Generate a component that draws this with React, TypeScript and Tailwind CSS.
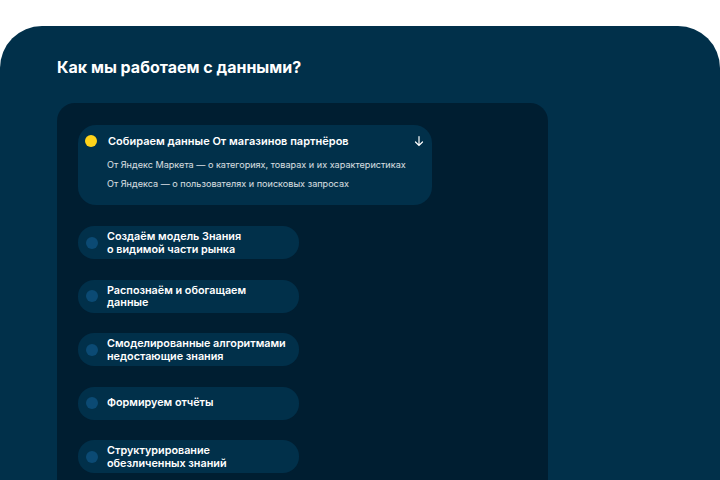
import React from "react";

const items: string[][] = [
  ["Создаём модель Знания", "о видимой части рынка"],
  ["Распознаём и обогащаем", "данные"],
  ["Смоделированные алгоритмами", "недостающие знания"],
  ["Формируем отчёты"],
  ["Структурирование", "обезличенных знаний"],
];

export default function App() {
  return (
    <div
      className="w-[720px] h-[480px] bg-white overflow-hidden pt-[26px]"
      style={{ fontFamily: "Inter, 'Noto Sans', sans-serif" }}
    >
      <div className="h-[480px] bg-[#01304a] rounded-t-[42px] px-[57px] pt-[30px]">
        <h1 className="text-[16px] font-bold text-white leading-[22px]">
          Как мы работаем с данными?
        </h1>
        <div className="mt-[25px] w-[491px] h-[400px] bg-[#001e31] rounded-[18px] pl-[21px] pt-[22px]">
          <div className="w-[354px] h-[80px] bg-[#01304a] rounded-[18px] pl-[7px] pr-[7px] pt-[8px]">
            <div className="flex items-center h-[14px] mt-[1px]">
              <div className="w-[12px] h-[12px] rounded-full bg-[#ffd31a]" />
              <div className="ml-[11px] text-[11px] font-semibold text-white">
                Собираем данные От магазинов партнёров
              </div>
              <svg className="ml-auto" width="12" height="12" viewBox="0 0 12 12" fill="none" stroke="white" strokeWidth="1.2" strokeLinecap="round">
                <path d="M6 1.5v9M2.5 7l3.5 3.5L9.5 7" />
              </svg>
            </div>
            <div className="ml-[22px] mt-[7px] text-[9.1px] text-white/85 leading-[19px]">
              <div>От Яндекс Маркета — о категориях, товарах и их характеристиках</div>
              <div>От Яндекса — о пользователях и поисковых запросах</div>
            </div>
          </div>
          <div className="mt-[21px] flex flex-col gap-[20.5px]">
            {items.map((lines, i) => (
              <div key={i} className="w-[221px] h-[33px] bg-[#01304a] rounded-[16px] flex items-center pl-[8px]">
                <div className="w-[12px] h-[12px] rounded-full bg-[#0b4a74] shrink-0" />
                <div
                  className={
                    lines.length > 1
                      ? "ml-[9px] pt-[2px] text-[10.8px] font-semibold text-white leading-[12.5px]"
                      : "ml-[9px] text-[10.8px] font-semibold text-white leading-[12.5px]"
                  }
                >
                  {lines.map((l, j) => (
                    <div key={j}>{l}</div>
                  ))}
                </div>
              </div>
            ))}
          </div>
        </div>
      </div>
    </div>
  );
}
